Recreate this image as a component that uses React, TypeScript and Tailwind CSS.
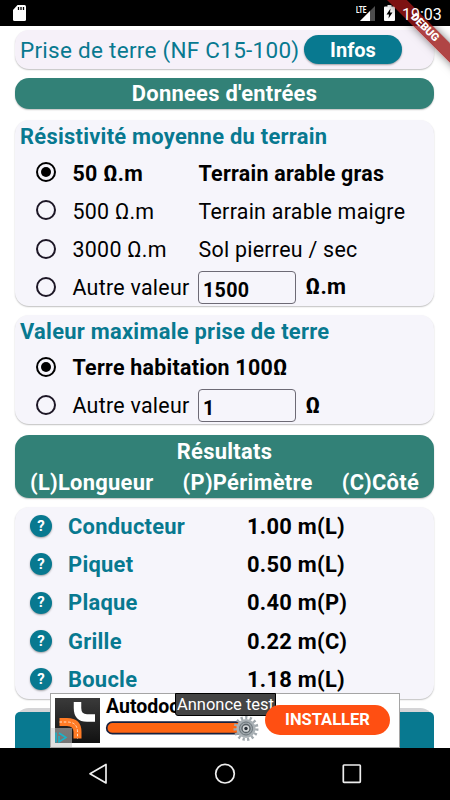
import type { ReactNode } from "react";

interface Soil {
  value: string;
  label: string;
  checked?: boolean;
}

const soils: Soil[] = [
  { value: "50 Ω.m", label: "Terrain arable gras", checked: true },
  { value: "500 Ω.m", label: "Terrain arable maigre" },
  { value: "3000 Ω.m", label: "Sol pierreu / sec" },
];

const results = [
  { name: "Conducteur", value: "1.00 m(L)" },
  { name: "Piquet", value: "0.50 m(L)" },
  { name: "Plaque", value: "0.40 m(P)" },
  { name: "Grille", value: "0.22 m(C)" },
  { name: "Boucle", value: "1.18 m(L)" },
];

function StatusBar() {
  return (
    <header className="flex h-[26px] shrink-0 items-center bg-black text-white">
      <svg width="13" height="16" viewBox="0 0 13 16" className="ml-[13px]">
        <path d="M4.500 0H11.500Q13 0 13 1.500V14.500Q13 16 11.500 16H1.500Q0 16 0 14.500V5Z" fill="#fff" />
        <path d="M5.500 2V5M8 2V5M10.500 2V5" stroke="#000" strokeWidth="1.300" />
      </svg>
      <div className="ml-auto flex items-center pr-[9px]">
        <svg width="20" height="17" viewBox="0 0 20 17">
          <path d="M19 1V16H4Z" fill="#4d4d4d" />
          <path d="M14 6V16H4Z" fill="#fff" />
          <rect width="11" height="8.500" fill="#000" />
          <text x="0" y="7.500" fontSize="8.500" fontWeight="700" textLength="10.500" lengthAdjust="spacingAndGlyphs" fill="#fff" fontFamily="Roboto, sans-serif">
            LTE
          </text>
        </svg>
        <svg width="11" height="16" viewBox="0 0 11 16" className="ml-[8px]">
          <path d="M3.500 0H7.500V1.500H10Q11 1.500 11 2.500V15Q11 16 10 16H1Q0 16 0 15V2.500Q0 1.500 1 1.500H3.500Z" fill="#fff" />
          <path d="M6.500 3.500L2.500 9.500H5L4.500 13.500L8.500 7.500H6Z" fill="#000" />
        </svg>
        <span className="relative z-20 ml-[7px] w-[39px] pt-[3px] text-[16px] leading-[23px] whitespace-nowrap">19:03</span>
      </div>
    </header>
  );
}

function DebugRibbon() {
  return (
    <div className="absolute top-0 right-0 h-[80px] w-[70px] overflow-hidden">
      <div className="absolute top-[20px] left-[-16px] flex h-[13.500px] w-[120px] rotate-45 items-center justify-center bg-[#9c1616]/80 pl-[2px] text-[11px] font-black tracking-[-0.1px] text-white shadow-[0_0_8px_rgba(0,0,0,0.5)]">
        DEBUG
      </div>
    </div>
  );
}

function Card({ className, children }: { className: string; children: ReactNode }) {
  return (
    <section className={`shrink-0 rounded-[14px] shadow-[0_1px_1.500px_rgba(0,0,0,0.25)] ${className}`}>
      {children}
    </section>
  );
}

function Radio({ checked }: { checked?: boolean }) {
  return (
    <svg width="20" height="20" viewBox="0 0 20 20" className="mr-[16.500px] ml-[21px] shrink-0">
      <circle cx="10" cy="10" r="9" fill="none" stroke={checked ? "#000" : "#1d1726"} strokeWidth="2" />
      {checked && <circle cx="10" cy="10" r="5" fill="#000" />}
    </svg>
  );
}

function CustomValue({ value, unit }: { value: string; unit: string }) {
  return (
    <div className="flex h-[38.300px] items-center">
      <Radio />
      <span className="w-[125.500px] pt-[2px] text-[21.400px] tracking-[0.270px]">Autre valeur</span>
      <span className="flex h-[33px] w-[98px] items-center rounded-[4px] border border-[#6d6a75] pt-[7px] pl-[4px] text-[19.700px] font-bold tracking-[0.270px]">
        {value}
      </span>
      <span className="ml-[9.500px] pt-px text-[21.900px] font-bold tracking-[0.270px]">{unit}</span>
    </div>
  );
}

function AdBanner() {
  return (
    <aside className="absolute top-[693px] left-[50px] z-10 h-[55px] w-[350px] border border-[#a5a5a5] bg-white">
      <svg width="348" height="53" viewBox="51 694 348 53">
        <defs>
          <linearGradient id="tile" x1="0" y1="0" x2="0" y2="1">
            <stop offset="0" stopColor="#3a3a3a" />
            <stop offset="1" stopColor="#111" />
          </linearGradient>
          <radialGradient id="gear">
            <stop offset="0" stopColor="#737b80" />
            <stop offset="0.600" stopColor="#a2aaaf" />
            <stop offset="1" stopColor="#aeb5b9" />
          </radialGradient>
        </defs>
        <rect x="55" y="698" width="45" height="45" fill="url(#tile)" />
        <path d="M77.500 702V708Q77.500 718 87 718H95" fill="none" stroke="#fff" strokeWidth="7.500" />
        <path d="M59.500 722H67Q77.500 722 77.500 732V738.500" fill="none" stroke="#ff7b25" strokeWidth="8" />
        <path d="M59.500 722H67Q77.500 722 77.500 732V738.500" fill="none" stroke="#ffe2c9" strokeWidth="1" strokeDasharray="2.500 1.800" />
        <rect x="51" y="728" width="21" height="19" fill="#c8c8c8" fillOpacity="0.550" />
        <path d="M56 732.500V742.500M59 733L66 737.500L59 742V736" fill="none" stroke="#16b5cc" strokeWidth="1.500" />
        <rect x="106.700" y="722.200" width="145" height="11.500" rx="5.750" fill="#ff6512" stroke="#17213f" strokeWidth="1.700" />
        <circle cx="246" cy="728.500" r="10.800" fill="none" stroke="#a0a8ad" strokeWidth="3.400" strokeDasharray="2.200 2.324" />
        <circle cx="246" cy="728.500" r="9.600" fill="url(#gear)" />
        <circle cx="246" cy="728.500" r="6.500" fill="none" stroke="#6b757b" strokeWidth="1" />
        <circle cx="246" cy="728.500" r="4" fill="#d5d9db" stroke="#596267" strokeWidth="1.300" />
        <circle cx="246" cy="728.500" r="1.700" fill="#283038" />
      </svg>
      <span className="absolute top-[1px] left-[55px] text-[19.500px] leading-[23px] font-bold whitespace-nowrap">Autodoc</span>
      <span className="absolute top-[-1px] left-[124px] flex h-[23px] w-[101px] items-center justify-center rounded-b-[3px] border border-black bg-[#444] pt-[2px] text-[16.500px] whitespace-nowrap text-white">
        Annonce test
      </span>
      <span className="absolute top-[11px] left-[214px] flex h-[30px] w-[125px] items-center justify-center rounded-full bg-[#ff4f12] pt-px text-[16.500px] font-bold text-white">
        INSTALLER
      </span>
    </aside>
  );
}

function NavigationBar() {
  return (
    <nav className="z-10 flex h-[52px] shrink-0 items-center bg-black">
      <svg width="450" height="52" viewBox="0 748 450 52" fill="none" stroke="#eee" strokeWidth="1.700" strokeLinejoin="round">
        <path d="M106 764.500V783L90 773.700Z" />
        <circle cx="225" cy="773.700" r="9.300" />
        <rect x="343.300" y="765" width="17" height="17.300" rx="0.700" />
      </svg>
    </nav>
  );
}

export default function App() {
  return (
    <div className="relative flex h-[800px] w-[450px] flex-col overflow-hidden bg-white font-[Roboto,sans-serif] text-black">
      <StatusBar />
      <main className="flex min-h-0 flex-1 flex-col overflow-hidden pt-[4px] pr-[16px] pl-[15px]">
        <Card className="mb-[9px] flex h-[39px] items-center bg-[#f6f1f9] pl-[5px]">
          <h1 className="w-[284px] pt-[3px] text-[22.500px] tracking-[0.270px] whitespace-nowrap text-[#087990]">
            Prise de terre (NF C15-100)
          </h1>
          <button className="h-[29px] w-[98px] rounded-full bg-[#087990] text-[20px] font-bold text-white shadow-[0_1px_2px_rgba(0,0,0,0.35)]">
            Infos
          </button>
        </Card>

        <Card className="mb-[11px] flex h-[31px] items-center justify-center bg-[#328177]">
          <h2 className="pt-[2px] text-[21.900px] font-bold tracking-[0.270px] text-white">Donnees d'entrées</h2>
        </Card>

        <Card className="mb-[9px] h-[186px] bg-[#f6f5fb]">
          <h3 className="h-[33px] pl-[5px] text-[21.900px] leading-[33px] font-bold tracking-[0.270px] text-[#087990]">
            Résistivité moyenne du terrain
          </h3>
          {soils.map((soil) => (
            <div
              key={soil.value}
              className={`flex h-[38.300px] items-center text-[21.400px] tracking-[0.270px] whitespace-nowrap ${soil.checked ? "font-bold" : ""}`}
            >
              <Radio checked={soil.checked} />
              <span className="w-[126px] pt-[3px]">{soil.value}</span>
              <span className="pt-[3px]">{soil.label}</span>
            </div>
          ))}
          <CustomValue value="1500" unit="Ω.m" />
        </Card>

        <Card className="mb-[11px] h-[109px] bg-[#f6f5fb]">
          <h3 className="h-[33px] pl-[5px] text-[21.900px] leading-[33px] font-bold tracking-[0.270px] text-[#087990]">
            Valeur maximale prise de terre
          </h3>
          <div className="flex h-[38.300px] items-center text-[21.400px] font-bold tracking-[0.270px]">
            <Radio checked />
            <span className="pt-px">Terre habitation 100Ω</span>
          </div>
          <CustomValue value="1" unit="Ω" />
        </Card>

        <Card className="mb-[9px] h-[63px] bg-[#328177] text-[21.900px] font-bold tracking-[0.270px] text-white">
          <h2 className="text-center leading-[33px]">Résultats</h2>
          <div className="flex justify-between px-[15px] leading-[30px]">
            <span>(L)Longueur</span>
            <span>(P)Périmètre</span>
            <span>(C)Côté</span>
          </div>
        </Card>

        <Card className="mb-[9px] h-[192px] bg-[#f6f5fb]">
          {results.map((result) => (
            <div
              key={result.name}
              className="flex h-[38.300px] items-center pl-[15px] text-[21.900px] font-bold tracking-[0.270px]"
            >
              <span className="mr-[16px] flex size-[22px] items-center justify-center rounded-full bg-[#087990] text-[15px] tracking-normal text-white shadow-[0_1px_2px_rgba(0,0,0,0.35)]">
                ?
              </span>
              <span className="w-[179px] pt-[2px] text-[#087990]">{result.name}</span>
              <span className="pt-[2px]">{result.value}</span>
            </div>
          ))}
        </Card>

        <div className="h-[60px] shrink-0 rounded-t-[14px] bg-[#d5d5d7] pt-[4px]">
          <div className="h-full rounded-t-[5px] bg-[#087990]" />
        </div>
      </main>
      <NavigationBar />
      <DebugRibbon />
      <AdBanner />
    </div>
  );
}
